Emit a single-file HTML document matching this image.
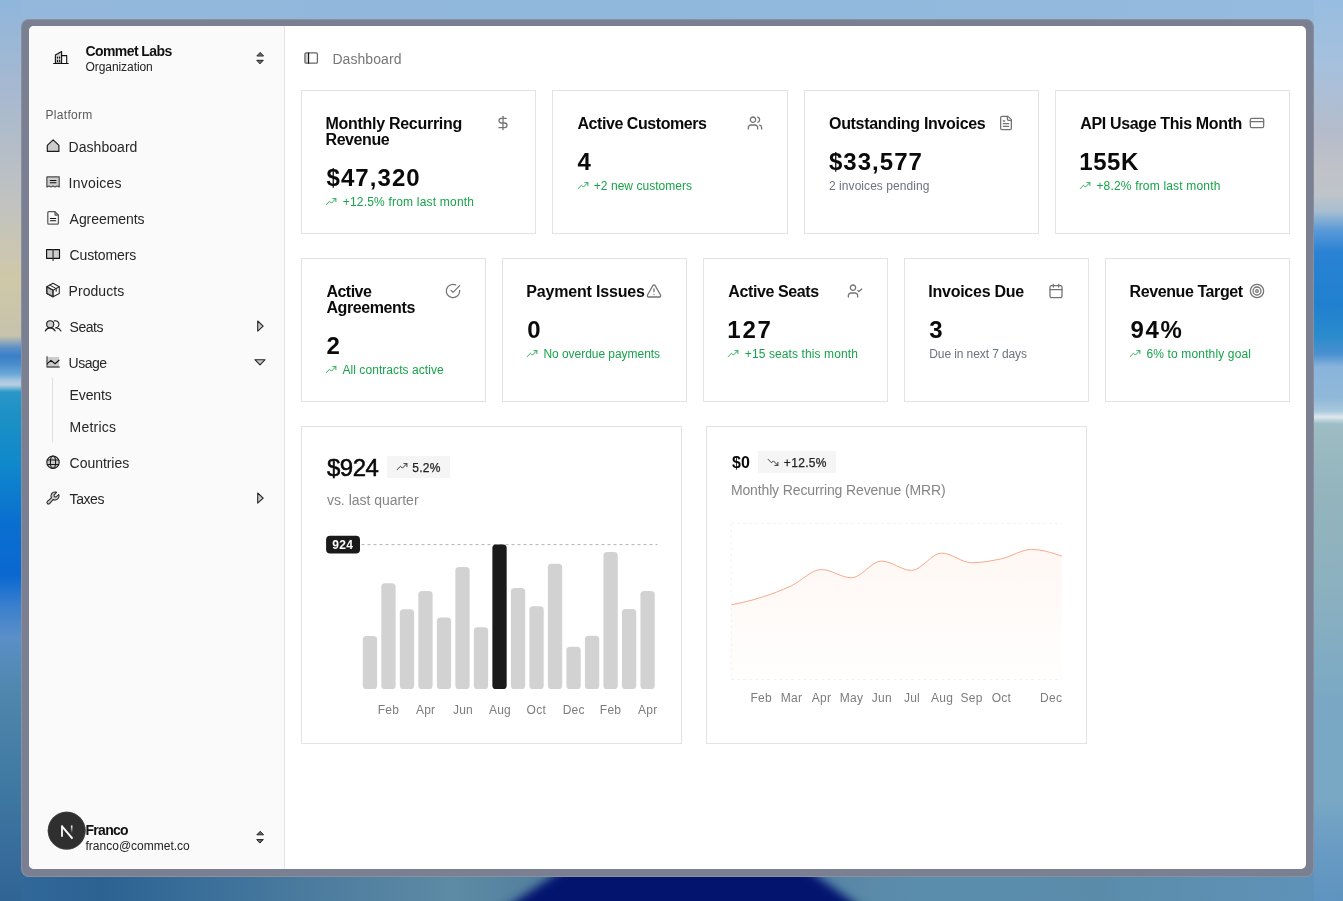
<!DOCTYPE html>
<html><head><meta charset="utf-8"><title>Dashboard</title>
<style>
*{margin:0;padding:0;box-sizing:border-box}
html,body{width:1343px;height:901px;overflow:hidden}
body{position:relative;font-family:"Liberation Sans",sans-serif;
background:linear-gradient(180deg,#8fb6dc 0px,#a9b9cf 100px,#c0c2c0 200px,#cfc8a8 280px,#c6c2ac 336px,#5a8fc8 348px,#3a7fc8 356px,#4a8ccc 364px,#6aa8d8 374px,#a8c8e0 381px,#b4cee0 385px,#2a96c8 392px,#1a90c4 420px,#0f88cc 466px,#0a6fd0 522px,#0a68d0 575px,#3a7fcf 606px,#5a8fc8 637px,#5088b0 684px,#4a82aa 720px,#3d76a0 800px,#35699a 870px,#2f6494 901px);}
.abs{position:absolute}
.t{position:absolute;white-space:nowrap;line-height:1}
#bgR{left:1300px;top:0;width:43px;height:901px;background:linear-gradient(180deg,#97bde0 0px,#a5c0de 60px,#b4bccb 130px,#c0c2c8 170px,#bec4ca 195px,#a8bed0 211px,#5a9ad8 230px,#2a82d4 252px,#2080d0 305px,#2a8ccc 336px,#4a90d0 354px,#8ab4dc 367px,#90b8d8 398px,#a8c8dc 411px,#dde7ee 417px,#9dbcc4 424px,#93b4bd 500px,#8ab0c0 600px,#7aa8c4 700px,#78a8c4 800px,#6a9cc4 845px,#5f94c0 901px)}
#bgT{left:21px;top:0;width:1293px;height:22px;background:linear-gradient(90deg,#93b8dc 0px,#8fb8dc 650px,#95bbde 1293px)}
#bgB{left:21px;top:872px;width:1293px;height:29px;overflow:hidden;background:linear-gradient(90deg,#30689a 0px,#2c6292 80px,#3a6f9a 180px,#4a7a9e 280px,#5d8aa4 430px,#55829f 500px,#4a78a0 700px,#5a8aa8 848px,#5a8cac 890px,#5a8caa 1080px,#5f92b8 1293px)}
#navy{left:-21px;top:-872px;width:1343px;height:901px;filter:blur(5px)}
#navy i{position:absolute;left:0;top:0;width:1343px;height:921px;background:#03146f;clip-path:polygon(577px 860px,794px 860px,880px 921px,486px 921px)}
#frame{left:21px;top:19px;width:1293px;height:858px;background:#7a8092;border-radius:8px;box-shadow:inset 0 0 0 1px rgba(255,255,255,.13)}
#win{left:29px;top:26px;width:1277px;height:843px;background:#fff;border-radius:5px;overflow:hidden}
#side{left:29px;top:26px;width:255px;height:843px;background:#fafafa;border-radius:5px 0 0 5px}
#sideb{left:284px;top:26px;width:1px;height:843px;background:#e4e4e4}
.card{position:absolute;border:1px solid #e3e3e3;background:#fff}
svg{position:absolute;overflow:visible}
.lu{fill:none;stroke:#737373;stroke-width:1.9;stroke-linecap:round;stroke-linejoin:round}
.tr{fill:none;stroke:#16a34a;stroke-width:19;stroke-linecap:round;stroke-linejoin:round}
</style></head><body>
<div class="abs" id="bgR"></div><div class="abs" id="bgT"></div><div class="abs" id="bgB"><div class="abs" id="navy"><i></i></div></div>
<div class="abs" id="frame"></div>
<div class="abs" id="win"></div>
<div class="abs" id="side"></div><div class="abs" id="sideb"></div>
<svg style="left:0;top:0" width="1343" height="901" viewBox="0 0 1343 901" fill="none" stroke-linecap="round" stroke-linejoin="round">
<!-- org building -->
<g stroke="#111" stroke-width="1.1">
<path d="M55.4 63.4V55.1L61.6 51.6V63.4Z" fill="#cfcfcf"/>
<path d="M61.6 55.6H66.7V63.4"/>
<path d="M53.6 63.5H68.2"/>
<path d="M57.5 57.2v.9M59.6 57.2v.9M57.5 60.4v1.1M59.6 60.4v1.1" stroke-width="1.2"/>
</g>
<!-- caret up-down org -->
<g stroke="#222" stroke-width="1" fill="#6a6a6a">
<path d="M257.1 55.7L260.2 52.4L263.3 55.7Z"/><path d="M257.1 60.3H263.3L260.2 63.6Z"/>
<path d="M257.1 834.5L260.2 831.3L263.3 834.5Z"/><path d="M257.1 839.6H263.3L260.2 842.8Z"/>
</g>
<!-- home -->
<path d="M47.3 151.4V145.3L53.1 139.8L58.9 145.3V151.4Z" fill="#cdcdcd" stroke="#1a1a1a" stroke-width="1.15"/>
<!-- receipt -->
<path d="M46.9 187V176.9H59.2V187l-2.05-1-2.05 1-2.05-1-2.05 1-2.05-1Z" fill="#cfcfcf" stroke="#4a4a4a" stroke-width="1.2"/>
<path d="M50.2 180.5H56M50.2 182.7H56" stroke="#111" stroke-width="1.1"/>
<!-- file -->
<path d="M55 211.7V215.1H58.4Z" fill="#bdbdbd" stroke="none"/>
<path d="M48.8 211.7H55L58.4 215.1V223.2a1 1 0 0 1-1 1H48.8a1 1 0 0 1-1-1V212.7a1 1 0 0 1 1-1Z" stroke="#5a5a5a" stroke-width="1.25"/>
<path d="M55 211.7V215.1H58.4" stroke="#5a5a5a" stroke-width="1.1"/>
<path d="M50.4 218.5H55.7M50.4 220.8H55.7" stroke="#111" stroke-width="1.1"/>
<!-- book -->
<path d="M46.6 249.6H59.5V258.3H46.6Z" fill="#cdcdcd" stroke="#111" stroke-width="1.15"/>
<path d="M53.05 249.6V260.4" stroke="#333" stroke-width="1.2"/>
<!-- package -->
<g stroke="#2a2a2a" stroke-width="1.05">
<path d="M46.8 286.8L53 290.2V296.8L46.8 293.5Z" fill="#c4c4c4"/>
<path d="M53 283.3L59.3 286.8V293.5L53 296.8L46.8 293.5V286.8Z"/>
<path d="M46.8 286.8L53 290.2L59.3 286.8M53 290.2V296.8"/>
<path d="M49.8 285.1L56.2 288.6V291.3"/>
</g>
<!-- users -->
<g stroke="#1f1f1f" stroke-width="1.1">
<circle cx="50.2" cy="324.3" r="3.55" fill="#cdcdcd"/>
<path d="M45.3 330.9C46.4 329 48.2 327.9 50.2 327.9S54 329 55.1 330.9"/>
<path d="M54.4 320.9a3.55 3.55 0 1 1 1.2 6.95"/>
<path d="M56.6 327.9c1.9.1 3.4 1.2 4.4 3"/>
</g>
<!-- chart line -->
<path d="M47 357H59V367H47Z" fill="#cbcbcb"/>
<path d="M47 356.7V367H59.2" stroke="#555" stroke-width="1.3"/>
<path d="M47.3 363.6L51 360.4L55 363.7L59 360.2" stroke="#111" stroke-width="1.15"/>
<!-- sub line -->
<path d="M52.5 378V442" stroke="#e0e0e0" stroke-width="1"/>
<!-- globe -->
<g stroke="#1a1a1a" stroke-width="1.1">
<circle cx="53" cy="462.2" r="6.2" fill="#c9c9c9"/>
<ellipse cx="53" cy="462.2" rx="2.6" ry="6.2"/>
<path d="M47.4 460H58.6M47.4 464.5H58.6"/>
</g>
<!-- wrench -->
<g transform="translate(45 490) scale(0.0625)" stroke="none">
<path d="M226.76,69a8,8,0,0,0-12.84-2.88l-40.3,37.19-17.23-3.7-3.7-17.23,37.19-40.3A8,8,0,0,0,187,29.24,72,72,0,0,0,88,96,72.34,72.34,0,0,0,94,124.94L33.79,177c-.15.12-.29.26-.43.39a32,32,0,0,0,45.26,45.26c.13-.13.27-.28.39-.42L131.06,162A72,72,0,0,0,232,96,71.56,71.56,0,0,0,226.76,69Z" fill="#cacaca"/>
<path d="M226.76,69a8,8,0,0,0-12.84-2.88l-40.3,37.19-17.23-3.7-3.7-17.23,37.19-40.3A8,8,0,0,0,187,29.24,72,72,0,0,0,88,96,72.34,72.34,0,0,0,94,124.94L33.79,177c-.15.12-.29.26-.43.39a32,32,0,0,0,45.26,45.26c.13-.13.27-.28.39-.42L131.06,162A72,72,0,0,0,232,96,71.56,71.56,0,0,0,226.76,69ZM160,152a56.14,56.14,0,0,1-27.07-7,8,8,0,0,0-9.92,1.77L67.11,211.51a16,16,0,0,1-22.62-22.62L109.18,133a8,8,0,0,0,1.77-9.93,56,56,0,0,1,58.36-82.31l-31.2,33.81a8,8,0,0,0-1.94,7.1L141.83,108a8,8,0,0,0,6.14,6.14l26.35,5.66a8,8,0,0,0,7.1-1.94l33.81-31.2A56.06,56.06,0,0,1,160,152Z" fill="#2a2a2a" fill-rule="evenodd"/>
</g>
<!-- carets -->
<g stroke="#222" stroke-width="1.05" fill="#c6c6c6">
<path d="M257.7 321V331.1L263.2 326.05Z"/>
<path d="M257.7 493V503.1L263.2 498.05Z"/>
<path d="M254.9 359.7H265.1L260 364.9Z"/>
</g>
<!-- sidebar toggle -->
<path d="M305 53H308.5V63.2H305Z" fill="#cfcfcf"/>
<rect x="304.9" y="52.9" width="12.5" height="10.3" rx="1.3" stroke="#666" stroke-width="1.25"/>
<path d="M308.6 53V63.2" stroke="#111" stroke-width="1.1"/>
<!-- avatar -->
<circle cx="66.7" cy="830.7" r="18.9" fill="#2f2f2f"/>
<circle cx="66.7" cy="830.7" r="18.6" stroke="#4a4a4a" stroke-width=".6"/>
<defs><linearGradient id="ng" x1="0" y1="825.5" x2="0" y2="833" gradientUnits="userSpaceOnUse"><stop offset="0" stop-color="#fff"/><stop offset="1" stop-color="#fff" stop-opacity="0"/></linearGradient></defs>
<path d="M62 836.7V825.5" stroke="#fff" stroke-width="1.8" stroke-linecap="butt"/><path d="M61.6 825.9L72.5 838.6" stroke="#fff" stroke-width="1.9" stroke-linecap="butt"/>
<path d="M71.7 825.5V833" stroke="url(#ng)" stroke-width="1.6" stroke-linecap="butt"/>
</svg>

<div class="card" style="left:301.0px;top:90px;width:235.25px;height:144px"></div>
<div class="card" style="left:552.25px;top:90px;width:235.25px;height:144px"></div>
<div class="card" style="left:803.5px;top:90px;width:235.25px;height:144px"></div>
<div class="card" style="left:1054.75px;top:90px;width:235.25px;height:144px"></div>
<svg class="lu" style="left:495.25px;top:115px" width="16" height="16" viewBox="0 0 24 24"><line x1="12" x2="12" y1="2" y2="22"/><path d="M17 5H9.5a3.5 3.5 0 0 0 0 7h5a3.5 3.5 0 0 1 0 7H6"/></svg>
<svg class="lu" style="left:746.5px;top:115px" width="16" height="16" viewBox="0 0 24 24"><path d="M16 21v-2a4 4 0 0 0-4-4H6a4 4 0 0 0-4 4v2"/><circle cx="9" cy="7" r="4"/><path d="M22 21v-2a4 4 0 0 0-3-3.87"/><path d="M16 3.13a4 4 0 0 1 0 7.75"/></svg>
<svg class="lu" style="left:997.75px;top:115px" width="16" height="16" viewBox="0 0 24 24"><path d="M15 2H6a2 2 0 0 0-2 2v16a2 2 0 0 0 2 2h12a2 2 0 0 0 2-2V7Z"/><path d="M14 2v4a2 2 0 0 0 2 2h4"/><path d="M10 9H8"/><path d="M16 13H8"/><path d="M16 17H8"/></svg>
<svg class="lu" style="left:1249.0px;top:115px" width="16" height="16" viewBox="0 0 24 24"><rect width="20" height="14" x="2" y="5" rx="2"/><line x1="2" x2="22" y1="10" y2="10"/></svg>
<svg class="tr" style="left:325.4px;top:195.7px" width="12" height="12" viewBox="0 0 256 256"><polyline points="232 56 136 152 96 112 24 184"/><polyline points="168 56 232 56 232 120"/></svg>
<svg class="tr" style="left:576.6px;top:179.7px" width="12" height="12" viewBox="0 0 256 256"><polyline points="232 56 136 152 96 112 24 184"/><polyline points="168 56 232 56 232 120"/></svg>
<svg class="tr" style="left:1079.2px;top:179.7px" width="12" height="12" viewBox="0 0 256 256"><polyline points="232 56 136 152 96 112 24 184"/><polyline points="168 56 232 56 232 120"/></svg>
<div class="card" style="left:301px;top:258px;width:185px;height:144px"></div>
<div class="card" style="left:502px;top:258px;width:185px;height:144px"></div>
<div class="card" style="left:703px;top:258px;width:185px;height:144px"></div>
<div class="card" style="left:904px;top:258px;width:185px;height:144px"></div>
<div class="card" style="left:1105px;top:258px;width:185px;height:144px"></div>
<svg class="lu" style="left:445px;top:283px" width="16" height="16" viewBox="0 0 24 24"><path d="M22 11.08V12a10 10 0 1 1-5.93-9.14"/><path d="m9 11 3 3L22 4"/></svg>
<svg class="lu" style="left:646px;top:283px" width="16" height="16" viewBox="0 0 24 24"><path d="m21.73 18-8-14a2 2 0 0 0-3.48 0l-8 14A2 2 0 0 0 4 21h16a2 2 0 0 0 1.73-3"/><path d="M12 9v4"/><path d="M12 17h.01"/></svg>
<svg class="lu" style="left:847px;top:283px" width="16" height="16" viewBox="0 0 24 24"><path d="M16 21v-2a4 4 0 0 0-4-4H6a4 4 0 0 0-4 4v2"/><circle cx="9" cy="7" r="4"/><polyline points="16 11 18 13 22 9"/></svg>
<svg class="lu" style="left:1048px;top:283px" width="16" height="16" viewBox="0 0 24 24"><path d="M8 2v4"/><path d="M16 2v4"/><rect width="18" height="18" x="3" y="4" rx="2"/><path d="M3 10h18"/></svg>
<svg class="lu" style="left:1249px;top:283px" width="16" height="16" viewBox="0 0 24 24"><circle cx="12" cy="12" r="10"/><circle cx="12" cy="12" r="6"/><circle cx="12" cy="12" r="2"/></svg>
<svg class="tr" style="left:325.4px;top:363.7px" width="12" height="12" viewBox="0 0 256 256"><polyline points="232 56 136 152 96 112 24 184"/><polyline points="168 56 232 56 232 120"/></svg>
<svg class="tr" style="left:526.4px;top:347.7px" width="12" height="12" viewBox="0 0 256 256"><polyline points="232 56 136 152 96 112 24 184"/><polyline points="168 56 232 56 232 120"/></svg>
<svg class="tr" style="left:727.4px;top:347.7px" width="12" height="12" viewBox="0 0 256 256"><polyline points="232 56 136 152 96 112 24 184"/><polyline points="168 56 232 56 232 120"/></svg>
<svg class="tr" style="left:1129.4px;top:347.7px" width="12" height="12" viewBox="0 0 256 256"><polyline points="232 56 136 152 96 112 24 184"/><polyline points="168 56 232 56 232 120"/></svg>
<div class="card" style="left:301px;top:426px;width:381px;height:318px"></div>
<div class="card" style="left:706px;top:426px;width:381px;height:318px"></div>
<div class="abs" style="left:387.2px;top:456px;width:62.7px;height:21.8px;background:#f5f5f5"></div>
<div class="abs" style="left:758.1px;top:451px;width:77.8px;height:21.7px;background:#f5f5f5"></div>
<svg class="tr" style="left:395.9px;top:460.8px;stroke:#222" width="12" height="12" viewBox="0 0 256 256"><polyline points="232 56 136 152 96 112 24 184"/><polyline points="168 56 232 56 232 120"/></svg>
<svg class="tr" style="left:766.6px;top:455.7px;stroke:#222" width="12" height="12" viewBox="0 0 256 256"><polyline points="232 200 136 104 96 144 24 72"/><polyline points="168 200 232 200 232 136"/></svg>
<svg style="left:0;top:0" width="1343" height="901" viewBox="0 0 1343 901">
<path d="M361.5 544.6H657.5" stroke="#b4b4b4" stroke-width="1" stroke-dasharray="3 3" fill="none"/>
<rect x="362.80" y="635.9" width="14.3" height="53.1" rx="3.6" fill="#d2d2d2"/>
<rect x="381.31" y="583.3" width="14.3" height="105.7" rx="3.6" fill="#d2d2d2"/>
<rect x="399.82" y="609.2" width="14.3" height="79.8" rx="3.6" fill="#d2d2d2"/>
<rect x="418.33" y="591" width="14.3" height="98.0" rx="3.6" fill="#d2d2d2"/>
<rect x="436.84" y="617.4" width="14.3" height="71.6" rx="3.6" fill="#d2d2d2"/>
<rect x="455.35" y="567.1" width="14.3" height="121.9" rx="3.6" fill="#d2d2d2"/>
<rect x="473.86" y="627.2" width="14.3" height="61.8" rx="3.6" fill="#d2d2d2"/>
<rect x="492.37" y="544.4" width="14.3" height="144.6" rx="3.6" fill="#1a1a1a"/>
<rect x="510.88" y="587.9" width="14.3" height="101.1" rx="3.6" fill="#d2d2d2"/>
<rect x="529.39" y="606.2" width="14.3" height="82.8" rx="3.6" fill="#d2d2d2"/>
<rect x="547.90" y="563.7" width="14.3" height="125.3" rx="3.6" fill="#d2d2d2"/>
<rect x="566.41" y="646.7" width="14.3" height="42.3" rx="3.6" fill="#d2d2d2"/>
<rect x="584.92" y="635.7" width="14.3" height="53.3" rx="3.6" fill="#d2d2d2"/>
<rect x="603.43" y="552" width="14.3" height="137.0" rx="3.6" fill="#d2d2d2"/>
<rect x="621.94" y="608.9" width="14.3" height="80.1" rx="3.6" fill="#d2d2d2"/>
<rect x="640.45" y="591" width="14.3" height="98.0" rx="3.6" fill="#d2d2d2"/>
<rect x="326.1" y="535.8" width="33.9" height="17.8" rx="4" fill="#1a1a1a"/>
<defs><linearGradient id="ag" x1="0" y1="549" x2="0" y2="679.6" gradientUnits="userSpaceOnUse"><stop offset="0" stop-color="#f6a27c" stop-opacity=".085"/><stop offset="1" stop-color="#f6a27c" stop-opacity=".012"/></linearGradient></defs>
<path d="M731.2 604.9C741.23 602.75 751.27 600.59 761.3 597.4C771.30 594.22 781.30 590.44 791.3 585.8C801.33 581.14 811.37 569.50 821.4 569.5C831.40 569.50 841.40 577.80 851.4 577.8C861.43 577.80 871.47 561.10 881.5 561.1C891.50 561.10 901.50 570.40 911.5 570.4C921.53 570.40 931.57 553.10 941.6 553.1C951.60 553.10 961.60 562.70 971.6 562.7C981.63 562.70 991.67 560.92 1001.7 558.7C1011.70 556.48 1021.70 549.40 1031.7 549.4C1041.73 549.40 1051.77 552.75 1061.8 556.1L1061.8 679.6L731.2 679.6Z" fill="url(#ag)"/>
<path d="M731.2 604.9C741.23 602.75 751.27 600.59 761.3 597.4C771.30 594.22 781.30 590.44 791.3 585.8C801.33 581.14 811.37 569.50 821.4 569.5C831.40 569.50 841.40 577.80 851.4 577.8C861.43 577.80 871.47 561.10 881.5 561.1C891.50 561.10 901.50 570.40 911.5 570.4C921.53 570.40 931.57 553.10 941.6 553.1C951.60 553.10 961.60 562.70 971.6 562.7C981.63 562.70 991.67 560.92 1001.7 558.7C1011.70 556.48 1021.70 549.40 1031.7 549.4C1041.73 549.40 1051.77 552.75 1061.8 556.1" fill="none" stroke="#f5ab8b" stroke-width="1"/>
<path d="M731.2 523.4H1061.9M731.2 679.6H1061.9M731.2 523.4V679.6" stroke="#f3f1f0" stroke-width="1" stroke-dasharray="3 3" fill="none"/>
</svg>
<div id="txt" style="position:absolute;left:0;top:0;width:1343px;height:901px;will-change:transform">
<span class="t" style="left:85.50px;top:44.15px;font-size:14px;font-weight:700;color:#111;letter-spacing:-0.579px;">Commet Labs</span>
<span class="t" style="left:85.50px;top:60.84px;font-size:12px;font-weight:400;color:#222;letter-spacing:-0.070px;">Organization</span>
<span class="t" style="left:45.50px;top:108.84px;font-size:12px;font-weight:400;color:#5a5a5a;letter-spacing:0.303px;">Platform</span>
<span class="t" style="left:68.60px;top:140.15px;font-size:14px;font-weight:400;color:#262626;letter-spacing:0.037px;">Dashboard</span>
<span class="t" style="left:68.60px;top:176.15px;font-size:14px;font-weight:400;color:#262626;letter-spacing:0.206px;">Invoices</span>
<span class="t" style="left:69.60px;top:212.15px;font-size:14px;font-weight:400;color:#262626;letter-spacing:-0.054px;">Agreements</span>
<span class="t" style="left:69.60px;top:248.15px;font-size:14px;font-weight:400;color:#262626;letter-spacing:-0.135px;">Customers</span>
<span class="t" style="left:68.60px;top:284.15px;font-size:14px;font-weight:400;color:#262626;letter-spacing:0.050px;">Products</span>
<span class="t" style="left:69.60px;top:320.15px;font-size:14px;font-weight:400;color:#262626;letter-spacing:-0.500px;">Seats</span>
<span class="t" style="left:68.60px;top:356.15px;font-size:14px;font-weight:400;color:#262626;letter-spacing:-0.521px;">Usage</span>
<span class="t" style="left:69.50px;top:388.15px;font-size:14px;font-weight:400;color:#262626;letter-spacing:-0.100px;">Events</span>
<span class="t" style="left:69.50px;top:420.15px;font-size:14px;font-weight:400;color:#262626;letter-spacing:0.232px;">Metrics</span>
<span class="t" style="left:69.60px;top:456.15px;font-size:14px;font-weight:400;color:#262626;letter-spacing:-0.040px;">Countries</span>
<span class="t" style="left:69.60px;top:492.15px;font-size:14px;font-weight:400;color:#262626;letter-spacing:-0.443px;">Taxes</span>
<span class="t" style="left:85.50px;top:823.15px;font-size:14px;font-weight:700;color:#111;letter-spacing:-0.705px;">Franco</span>
<span class="t" style="left:85.50px;top:839.84px;font-size:12px;font-weight:400;color:#222;letter-spacing:0.004px;">franco@commet.co</span>
<span class="t" style="left:332.40px;top:52.15px;font-size:14px;font-weight:400;color:#777;letter-spacing:0.075px;">Dashboard</span>
<span class="t" style="left:325.50px;top:116.06px;font-size:16px;font-weight:700;color:#0a0a0a;letter-spacing:-0.285px;">Monthly Recurring</span>
<span class="t" style="left:325.50px;top:132.06px;font-size:16px;font-weight:700;color:#0a0a0a;letter-spacing:-0.416px;">Revenue</span>
<span class="t" style="left:326.50px;top:166.08px;font-size:24px;font-weight:700;color:#0a0a0a;letter-spacing:1.066px;">$47,320</span>
<span class="t" style="left:342.70px;top:196.14px;font-size:12px;font-weight:400;color:#16a34a;letter-spacing:0.201px;">+12.5% from last month</span>
<span class="t" style="left:577.50px;top:116.06px;font-size:16px;font-weight:700;color:#0a0a0a;letter-spacing:-0.443px;">Active Customers</span>
<span class="t" style="left:577.50px;top:150.08px;font-size:24px;font-weight:700;color:#0a0a0a;letter-spacing:0.000px;">4</span>
<span class="t" style="left:593.80px;top:180.14px;font-size:12px;font-weight:400;color:#16a34a;letter-spacing:0.039px;">+2 new customers</span>
<span class="t" style="left:829.00px;top:116.06px;font-size:16px;font-weight:700;color:#0a0a0a;letter-spacing:-0.315px;">Outstanding Invoices</span>
<span class="t" style="left:829.00px;top:150.08px;font-size:24px;font-weight:700;color:#0a0a0a;letter-spacing:1.016px;">$33,577</span>
<span class="t" style="left:829.00px;top:180.14px;font-size:12px;font-weight:400;color:#6b7280;letter-spacing:0.057px;">2 invoices pending</span>
<span class="t" style="left:1080.30px;top:116.06px;font-size:16px;font-weight:700;color:#0a0a0a;letter-spacing:-0.359px;">API Usage This Month</span>
<span class="t" style="left:1079.30px;top:150.08px;font-size:24px;font-weight:700;color:#0a0a0a;letter-spacing:0.552px;">155K</span>
<span class="t" style="left:1096.40px;top:180.14px;font-size:12px;font-weight:400;color:#16a34a;letter-spacing:0.179px;">+8.2% from last month</span>
<span class="t" style="left:326.40px;top:284.06px;font-size:16px;font-weight:700;color:#0a0a0a;letter-spacing:-0.505px;">Active</span>
<span class="t" style="left:326.40px;top:300.06px;font-size:16px;font-weight:700;color:#0a0a0a;letter-spacing:-0.398px;">Agreements</span>
<span class="t" style="left:326.40px;top:334.08px;font-size:24px;font-weight:700;color:#0a0a0a;letter-spacing:0.000px;">2</span>
<span class="t" style="left:342.40px;top:364.14px;font-size:12px;font-weight:400;color:#16a34a;letter-spacing:0.070px;">All contracts active</span>
<span class="t" style="left:526.30px;top:284.06px;font-size:16px;font-weight:700;color:#0a0a0a;letter-spacing:-0.181px;">Payment Issues</span>
<span class="t" style="left:527.30px;top:318.08px;font-size:24px;font-weight:700;color:#0a0a0a;letter-spacing:0.000px;">0</span>
<span class="t" style="left:543.40px;top:348.14px;font-size:12px;font-weight:400;color:#16a34a;letter-spacing:-0.039px;">No overdue payments</span>
<span class="t" style="left:728.30px;top:284.06px;font-size:16px;font-weight:700;color:#0a0a0a;letter-spacing:-0.388px;">Active Seats</span>
<span class="t" style="left:727.30px;top:318.08px;font-size:24px;font-weight:700;color:#0a0a0a;letter-spacing:1.752px;">127</span>
<span class="t" style="left:744.80px;top:348.14px;font-size:12px;font-weight:400;color:#16a34a;letter-spacing:0.106px;">+15 seats this month</span>
<span class="t" style="left:928.30px;top:284.06px;font-size:16px;font-weight:700;color:#0a0a0a;letter-spacing:-0.255px;">Invoices Due</span>
<span class="t" style="left:929.30px;top:318.08px;font-size:24px;font-weight:700;color:#0a0a0a;letter-spacing:0.000px;">3</span>
<span class="t" style="left:929.30px;top:348.14px;font-size:12px;font-weight:400;color:#6b7280;letter-spacing:-0.100px;">Due in next 7 days</span>
<span class="t" style="left:1129.50px;top:284.06px;font-size:16px;font-weight:700;color:#0a0a0a;letter-spacing:-0.402px;">Revenue Target</span>
<span class="t" style="left:1130.50px;top:318.08px;font-size:24px;font-weight:700;color:#0a0a0a;letter-spacing:1.652px;">94%</span>
<span class="t" style="left:1146.50px;top:348.14px;font-size:12px;font-weight:400;color:#16a34a;letter-spacing:0.142px;">6% to monthly goal</span>
<span class="t" style="left:326.90px;top:455.68px;font-size:24px;font-weight:400;color:#0a0a0a;letter-spacing:-0.448px;-webkit-text-stroke:0.5px #0a0a0a;">$924</span>
<span class="t" style="left:412.30px;top:461.54px;font-size:12px;font-weight:400;color:#222;letter-spacing:0.273px;-webkit-text-stroke:0.25px #222;">5.2%</span>
<span class="t" style="left:326.90px;top:492.85px;font-size:14px;font-weight:400;color:#858585;letter-spacing:-0.010px;">vs. last quarter</span>
<span class="t" style="left:332.30px;top:538.84px;font-size:12px;font-weight:700;color:#fff;letter-spacing:0.326px;">924</span>
<span class="t" style="left:731.90px;top:454.56px;font-size:16px;font-weight:700;color:#0a0a0a;letter-spacing:0.102px;">$0</span>
<span class="t" style="left:783.80px;top:456.84px;font-size:12px;font-weight:400;color:#222;letter-spacing:0.327px;-webkit-text-stroke:0.25px #222;">+12.5%</span>
<span class="t" style="left:730.90px;top:483.25px;font-size:14px;font-weight:400;color:#858585;letter-spacing:-0.132px;">Monthly Recurring Revenue (MRR)</span>
<span class="t" style="left:377.71px;top:703.84px;font-size:12px;color:#7c7c7c;letter-spacing:0.25px">Feb</span>
<span class="t" style="left:415.89px;top:703.84px;font-size:12px;color:#7c7c7c;letter-spacing:0.25px">Apr</span>
<span class="t" style="left:452.91px;top:703.84px;font-size:12px;color:#7c7c7c;letter-spacing:0.25px">Jun</span>
<span class="t" style="left:488.93px;top:703.84px;font-size:12px;color:#7c7c7c;letter-spacing:0.25px">Aug</span>
<span class="t" style="left:526.62px;top:703.84px;font-size:12px;color:#7c7c7c;letter-spacing:0.25px">Oct</span>
<span class="t" style="left:562.64px;top:703.84px;font-size:12px;color:#7c7c7c;letter-spacing:0.25px">Dec</span>
<span class="t" style="left:599.83px;top:703.84px;font-size:12px;color:#7c7c7c;letter-spacing:0.25px">Feb</span>
<span class="t" style="left:638.01px;top:703.84px;font-size:12px;color:#7c7c7c;letter-spacing:0.25px">Apr</span>
<span class="t" style="left:750.50px;top:691.54px;font-size:12px;color:#7c7c7c;letter-spacing:0.25px">Feb</span>
<span class="t" style="left:780.72px;top:691.54px;font-size:12px;color:#7c7c7c;letter-spacing:0.25px">Mar</span>
<span class="t" style="left:811.76px;top:691.54px;font-size:12px;color:#7c7c7c;letter-spacing:0.25px">Apr</span>
<span class="t" style="left:839.82px;top:691.54px;font-size:12px;color:#7c7c7c;letter-spacing:0.25px">May</span>
<span class="t" style="left:871.86px;top:691.54px;font-size:12px;color:#7c7c7c;letter-spacing:0.25px">Jun</span>
<span class="t" style="left:903.91px;top:691.54px;font-size:12px;color:#7c7c7c;letter-spacing:0.25px">Jul</span>
<span class="t" style="left:930.96px;top:691.54px;font-size:12px;color:#7c7c7c;letter-spacing:0.25px">Aug</span>
<span class="t" style="left:960.51px;top:691.54px;font-size:12px;color:#7c7c7c;letter-spacing:0.25px">Sep</span>
<span class="t" style="left:991.73px;top:691.54px;font-size:12px;color:#7c7c7c;letter-spacing:0.25px">Oct</span>
<span class="t" style="left:1040.06px;top:691.54px;font-size:12px;color:#7c7c7c;letter-spacing:0.25px">Dec</span>
</div>
</body></html>
